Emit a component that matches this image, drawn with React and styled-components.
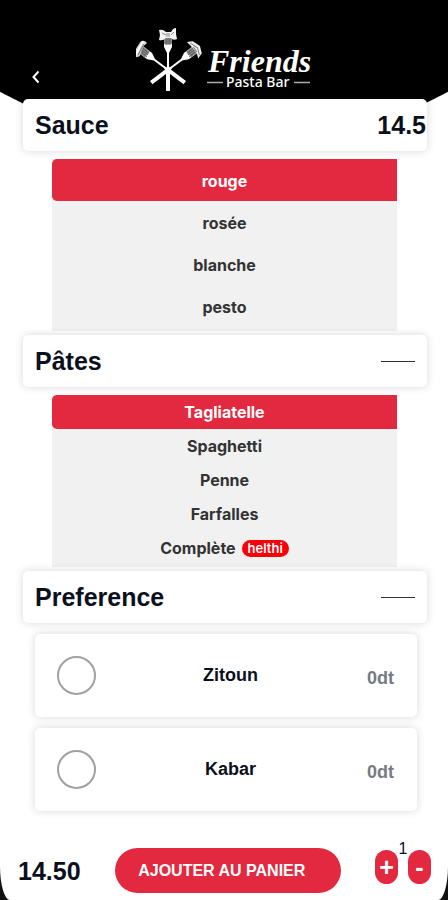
import React, { useState } from "react";
import styled, { createGlobalStyle } from "styled-components";

const RED = "#e2293f";

const GlobalStyle = createGlobalStyle`
  * {
    box-sizing: border-box;
  }
  body {
    margin: 0;
    background: #111;
    font-family: "Liberation Sans", Arial, sans-serif;
    color: #0b101c;
  }
  button,
  input {
    font-family: inherit;
    margin: 0;
  }
`;

const Page = styled.div`
  min-height: 100vh;
  padding-bottom: 1px;
  background: #fff;
  border-radius: 0 0 10px 10px / 0 0 34px 34px;
  overflow: hidden;
`;

const Header = styled.header`
  display: grid;
  grid-template-columns: 1fr auto 1fr;
  align-items: end;
  height: 150px;
  padding: 0 27px 54px;
  background: #000;
  clip-path: circle(459px at 50% -309px);
`;

const BackButton = styled.button`
  display: flex;
  justify-self: start;
  padding: 3px;
  margin-bottom: 9px;
  border: none;
  background: none;
  color: #fff;
  cursor: pointer;
`;

const LogoSvg = styled.svg`
  display: block;
  width: 176px;
  height: 70px;
`;

const Content = styled.main`
  margin-top: -51px;
  position: relative;
`;

const SectionBar = styled.div`
  display: flex;
  justify-content: space-between;
  align-items: center;
  height: 52px;
  margin: 0 21px 0 23px;
  padding: 0 ${(props) => (props.$flush ? 1 : 12)}px 0 12px;
  border-radius: 5px;
  background: #fff;
  box-shadow: 0 0 8px rgba(0, 0, 0, 0.16);
  position: relative;
`;

const SectionTitle = styled.h2`
  margin: 0;
  font-size: 25px;
  line-height: 30px;
`;

const Price = styled.span`
  font-size: 25px;
  line-height: 30px;
  font-weight: bold;
`;

const ToggleButton = styled.button`
  display: flex;
  padding: 8px 0;
  border: none;
  background: none;
  cursor: pointer;
`;

const ToggleLine = styled.span`
  width: 34px;
  height: 1px;
  background: #333;
`;

const OptionList = styled.div`
  margin: 8px 51px 4px 52px;
  padding-bottom: ${(props) => (props.$roomy ? 4 : 2)}px;
  background: #f1f1f1;
`;

const Option = styled.label`
  display: flex;
  justify-content: center;
  align-items: center;
  gap: 6px;
  height: ${(props) => (props.$roomy ? 42 : 34)}px;
  padding-top: ${(props) => (props.$roomy ? 2 : 0)}px;
  border-radius: 5px 0 0 5px;
  background: ${(props) => (props.$selected ? RED : "transparent")};
  color: ${(props) => (props.$selected ? "#fff" : "#333")};
  font-family: Inter, sans-serif;
  font-size: 16px;
  font-weight: 700;
  cursor: pointer;
`;

const OptionRadio = styled.input`
  appearance: none;
  position: absolute;
  opacity: 0;
`;

const Badge = styled.span`
  padding: 0 6px;
  border-radius: 9px;
  background: #fb0007;
  color: #fff;
  font-size: 13px;
  font-weight: 600;
  line-height: 17px;
`;

const PreferenceList = styled.div`
  display: grid;
  gap: 11px;
  margin: 11px 31px 0 35px;
`;

const PreferenceCard = styled.label`
  display: grid;
  grid-template-columns: 39px 1fr auto;
  align-items: center;
  height: 83px;
  padding: 0 23px 0 22px;
  border-radius: 5px;
  background: #fff;
  box-shadow: 0 0 8px rgba(0, 0, 0, 0.16);
  font-size: 18px;
  font-weight: bold;
  text-align: center;
  cursor: pointer;
`;

const PreferenceCheck = styled.input`
  appearance: none;
  width: 39px;
  height: 39px;
  border: 2px solid #a0a0a0;
  border-radius: 50%;
  &:checked {
    background: ${RED};
  }
`;

const PreferenceName = styled.span`
  padding-right: 2px;
`;

const PreferencePrice = styled.span`
  padding-top: 6px;
  color: #747b84;
`;

const Footer = styled.footer`
  display: flex;
  justify-content: space-between;
  align-items: center;
  margin-top: 31px;
  padding: 0 17px 0 18px;
`;

const AddButton = styled.button`
  flex: 0 1 226px;
  height: 45px;
  padding: 0 12px 0 0;
  border: none;
  border-radius: 23px;
  background: ${RED};
  color: #fff;
  font-size: 16px;
  font-weight: bold;
  cursor: pointer;
`;

const Stepper = styled.div`
  display: flex;
  align-items: flex-end;
  height: 57px;
  padding-bottom: 15px;
`;

const StepButton = styled.button`
  width: 23px;
  height: 34px;
  padding: 0;
  border: none;
  border-radius: 12px;
  background: ${RED};
  color: #fff;
  font-size: 25px;
  line-height: 34px;
  font-weight: bold;
  cursor: pointer;
`;

const Count = styled.output`
  align-self: flex-start;
  width: 10px;
  font-size: 16px;
  line-height: 14px;
  text-align: center;
`;

const sauces = [{ name: "rouge" }, { name: "rosée" }, { name: "blanche" }, { name: "pesto" }];

const pastas = [
  { name: "Tagliatelle" },
  { name: "Spaghetti" },
  { name: "Penne" },
  { name: "Farfalles" },
  { name: "Complète", badge: "helthi" },
];

const preferences = ["Zitoun", "Kabar"];

function Fork() {
  return (
    <>
      <path d="M-1 0 V-17 L-4 -23 V-35 H4 V-23 L1 -17 V0 Z" fill="#fff" />
      <path d="M-4 -35 H4 V-26 H-4 Z" fill="#8c8c8c" />
      <path d="M-2 -34 V-25 M0 -34 V-25 M2 -34 V-25" stroke="#5a5a5a" strokeWidth="1" />
      <path d="M-1 -4 H1 L2 2 V21 H-2 V2 Z" fill="#fff" />
    </>
  );
}

function Logo() {
  return (
    <LogoSvg viewBox="0 0 176 70" role="img" aria-label="Friends Pasta Bar">
      <g transform="translate(32 44)">
        <Fork />
        <path
          d="M-9 -40 Q-5 -41 -2 -38 H3 Q5 -42 8 -42 L8 -36 L9 -31 Q5 -29 3 -32 H-2 Q-5 -29 -9 -30 L-8 -35 Z"
          fill="#f2f2f2"
        />
        <path d="M-6 -37 L-2 -35 M6 -38 L3 -35 M-1 -37 V-33 M1 -37 V-33" stroke="#888" />
      </g>
      <g transform="translate(32 44) rotate(-53)">
        <Fork />
        <path d="M-9 -33 Q-11 -37 -6 -38 L6 -39 Q10 -38 9 -33 L4 -34 L-6 -31 Z" fill="#d8d8d8" />
        <path d="M-8 -35 L8 -37" stroke="#fff" strokeWidth="2" />
        <path d="M-6 -33 L6 -35" stroke="#777" />
      </g>
      <g transform="translate(32 44) rotate(53)">
        <Fork />
        <path d="M-11 -32 L-8 -37 L0 -40 L7 -37 L9 -31 L4 -33 L-4 -33 Z" fill="#f0f0f0" />
        <path d="M-8 -34 L0 -37 L7 -34 M-3 -34 L3 -34" stroke="#777" fill="none" />
      </g>
      <text
        x="72"
        y="46"
        fill="#fff"
        fontFamily="Liberation Serif, serif"
        fontStyle="italic"
        fontWeight="700"
        fontSize="32"
      >
        Friends
      </text>
      <path d="M71 56.500 H87 M158 56.500 H174" stroke="#aaa" strokeWidth="1.500" />
      <text x="90" y="61" fill="#fff" fontFamily="Noto Sans, sans-serif" fontWeight="500" fontSize="14">
        Pasta Bar
      </text>
    </LogoSvg>
  );
}

function OptionGroup({ name, options, value, onChange, roomy }) {
  return (
    <OptionList role="radiogroup" aria-label={name} $roomy={roomy}>
      {options.map((option) => (
        <Option key={option.name} $selected={option.name === value} $roomy={roomy}>
          <OptionRadio
            type="radio"
            name={name}
            checked={option.name === value}
            onChange={() => onChange(option.name)}
          />
          {option.name}
          {option.badge && <Badge>{option.badge}</Badge>}
        </Option>
      ))}
    </OptionList>
  );
}

export default function App() {
  const [sauce, setSauce] = useState("rouge");
  const [pasta, setPasta] = useState("Tagliatelle");
  const [showPastas, setShowPastas] = useState(true);
  const [showPreferences, setShowPreferences] = useState(true);
  const [count, setCount] = useState(1);

  return (
    <Page>
      <GlobalStyle />
      <Header>
        <BackButton aria-label="Retour">
          <svg width="12" height="14" viewBox="0 0 12 14" fill="none">
            <path d="M8.500 1.500 L3.500 7 L8.500 12.500" stroke="currentColor" strokeWidth="2" />
          </svg>
        </BackButton>
        <Logo />
      </Header>
      <Content>
        <SectionBar $flush>
          <SectionTitle>Sauce</SectionTitle>
          <Price>14.5</Price>
        </SectionBar>
        <OptionGroup name="Sauce" options={sauces} value={sauce} onChange={setSauce} roomy />
        <SectionBar>
          <SectionTitle>Pâtes</SectionTitle>
          <ToggleButton aria-label="Pâtes" onClick={() => setShowPastas(!showPastas)}>
            <ToggleLine />
          </ToggleButton>
        </SectionBar>
        {showPastas && (
          <OptionGroup name="Pâtes" options={pastas} value={pasta} onChange={setPasta} />
        )}
        <SectionBar>
          <SectionTitle>Preference</SectionTitle>
          <ToggleButton
            aria-label="Preference"
            onClick={() => setShowPreferences(!showPreferences)}
          >
            <ToggleLine />
          </ToggleButton>
        </SectionBar>
        {showPreferences && (
          <PreferenceList>
            {preferences.map((preference) => (
              <PreferenceCard key={preference}>
                <PreferenceCheck type="checkbox" />
                <PreferenceName>{preference}</PreferenceName>
                <PreferencePrice>0dt</PreferencePrice>
              </PreferenceCard>
            ))}
          </PreferenceList>
        )}
      </Content>
      <Footer>
        <Price>{(14.5 * count).toFixed(2)}</Price>
        <AddButton>AJOUTER AU PANIER</AddButton>
        <Stepper>
          <StepButton onClick={() => setCount(count + 1)}>+</StepButton>
          <Count>{count}</Count>
          <StepButton onClick={() => setCount(Math.max(1, count - 1))}>-</StepButton>
        </Stepper>
      </Footer>
    </Page>
  );
}
